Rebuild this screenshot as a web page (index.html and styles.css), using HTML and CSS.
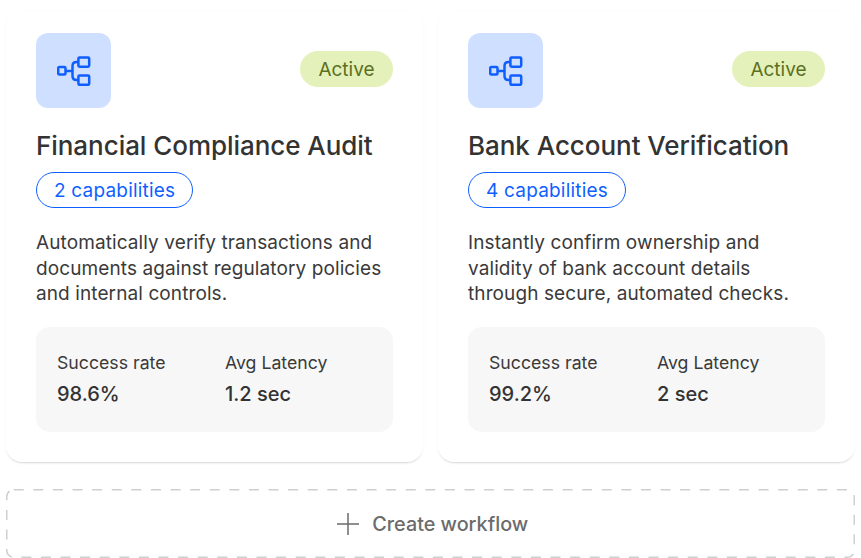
FILE: index.html
```html
<!DOCTYPE html>
<html lang="en">
<head>
  <meta charset="UTF-8" />
  <title>Workflows</title>
  <link rel="stylesheet" href="styles.css">
</head>
<body>
  <div class="cards">
    <div class="card">
      <div class="card-top">
        <div class="icon-box">
          <svg width="34" height="30" viewBox="0 0 34 30" fill="none" stroke="#0f5fff" stroke-width="2.500">
            <rect x="1.200" y="11" width="7.300" height="7.600" rx="1.200" />
            <rect x="21.400" y="1.400" width="10.800" height="9.400" rx="1.200" />
            <rect x="21.400" y="19.400" width="10.800" height="9.400" rx="1.200" />
            <path d="M8 15H15.500M21 6H19.500C17 6 15.500 7.500 15.500 10V20C15.500 22.500 17 24 19.500 24H21" />
          </svg>
        </div>
        <span class="status">Active</span>
      </div>
      <h3>Financial Compliance Audit</h3>
      <span class="caps">2 capabilities</span>
      <p class="desc">Automatically verify transactions and documents against regulatory policies and internal controls.</p>
      <div class="stats">
        <div class="stat">
          <div class="stat-label">Success rate</div>
          <div class="stat-value">98.6%</div>
        </div>
        <div class="stat">
          <div class="stat-label">Avg Latency</div>
          <div class="stat-value">1.2 sec</div>
        </div>
      </div>
    </div>

    <div class="card">
      <div class="card-top">
        <div class="icon-box">
          <svg width="34" height="30" viewBox="0 0 34 30" fill="none" stroke="#0f5fff" stroke-width="2.500">
            <rect x="1.200" y="11" width="7.300" height="7.600" rx="1.200" />
            <rect x="21.400" y="1.400" width="10.800" height="9.400" rx="1.200" />
            <rect x="21.400" y="19.400" width="10.800" height="9.400" rx="1.200" />
            <path d="M8 15H15.500M21 6H19.500C17 6 15.500 7.500 15.500 10V20C15.500 22.500 17 24 19.500 24H21" />
          </svg>
        </div>
        <span class="status">Active</span>
      </div>
      <h3>Bank Account Verification</h3>
      <span class="caps">4 capabilities</span>
      <p class="desc">Instantly confirm ownership and validity of bank account details through secure, automated checks.</p>
      <div class="stats">
        <div class="stat">
          <div class="stat-label">Success rate</div>
          <div class="stat-value">99.2%</div>
        </div>
        <div class="stat">
          <div class="stat-label">Avg Latency</div>
          <div class="stat-value">2 sec</div>
        </div>
      </div>
    </div>
  </div>

  <div class="create">
    <svg class="dashes" width="849" height="69" fill="none">
      <rect x="0.750" y="0.750" width="847.500" height="67.500" rx="7" stroke="#cfcfcf" stroke-width="1.500" stroke-dasharray="10 9.600" />
    </svg>
    <svg width="24" height="24" viewBox="0 0 24 24" fill="none" stroke="#6b6b6b" stroke-width="1.500">
      <path d="M12 1V23M1 12H23" />
    </svg>
    <span>Create workflow</span>
  </div>
</body>
</html>
```

FILE: styles.css
```css
* {
  box-sizing: border-box;
}
body {
  margin: 0;
  padding: 12px 6px 0;
  background-color: #fff;
  font-family: 'Inter', sans-serif;
  color: #333;
  overflow: hidden;
}
.cards {
  display: grid;
  grid-template-columns: 417px 417px;
  gap: 15px;
}
.card {
  height: 450px;
  padding: 21px 30px 0;
  background-color: #fff;
  border-radius: 16px;
  box-shadow: 0 2px 2px -1px rgba(0,0,0,0.16), 0 0 10px rgba(0,0,0,0.015);
}
.card-top {
  display: flex;
  justify-content: space-between;
  align-items: center;
}
.icon-box {
  width: 75px;
  height: 75px;
  display: flex;
  align-items: center;
  justify-content: center;
  background-color: #cfdfff;
  border-radius: 12px;
}
.status {
  width: 93px;
  height: 36px;
  margin-top: -3px;
  display: flex;
  align-items: center;
  justify-content: center;
  background-color: #e4f1ba;
  color: #5c7021;
  border-radius: 18px;
  font-size: 19px;
}
h3 {
  margin: 21px 0 0;
  font-size: 26px;
  line-height: 34px;
  font-weight: 500;
  letter-spacing: -0.05px;
  color: #333;
}
.caps {
  display: inline-flex;
  align-items: center;
  height: 36px;
  margin-top: 9px;
  padding: 1px 17px 0;
  border: 1.5px solid #0f5fff;
  border-radius: 18px;
  color: #0f5fff;
  font-size: 19px;
  letter-spacing: 0.2px;
}
.desc {
  margin: 22px 0 0;
  font-size: 19px;
  line-height: 25.500px;
  letter-spacing: 0.1px;
  color: #3a3a3a;
}
.stats {
  display: flex;
  height: 105px;
  margin-top: 20px;
  padding: 25px 21px 0;
  background-color: #f7f7f7;
  border-radius: 14px;
}
.stat {
  flex: 0 0 168px;
}
.stat-label {
  font-size: 17.700px;
  line-height: 22px;
  color: #3a3a3a;
}
.stat-value {
  margin-top: 8px;
  font-size: 20px;
  line-height: 24px;
  font-weight: 500;
  color: #333;
}
.create {
  position: relative;
  width: 849px;
  height: 69px;
  margin-top: 27px;
  padding-left: 3px;
  display: flex;
  align-items: center;
  justify-content: center;
  gap: 12.500px;
  color: #6b6b6b;
  font-size: 19.800px;
  font-weight: 500;
}
.dashes {
  position: absolute;
  top: 0;
  left: 0;
}
```
